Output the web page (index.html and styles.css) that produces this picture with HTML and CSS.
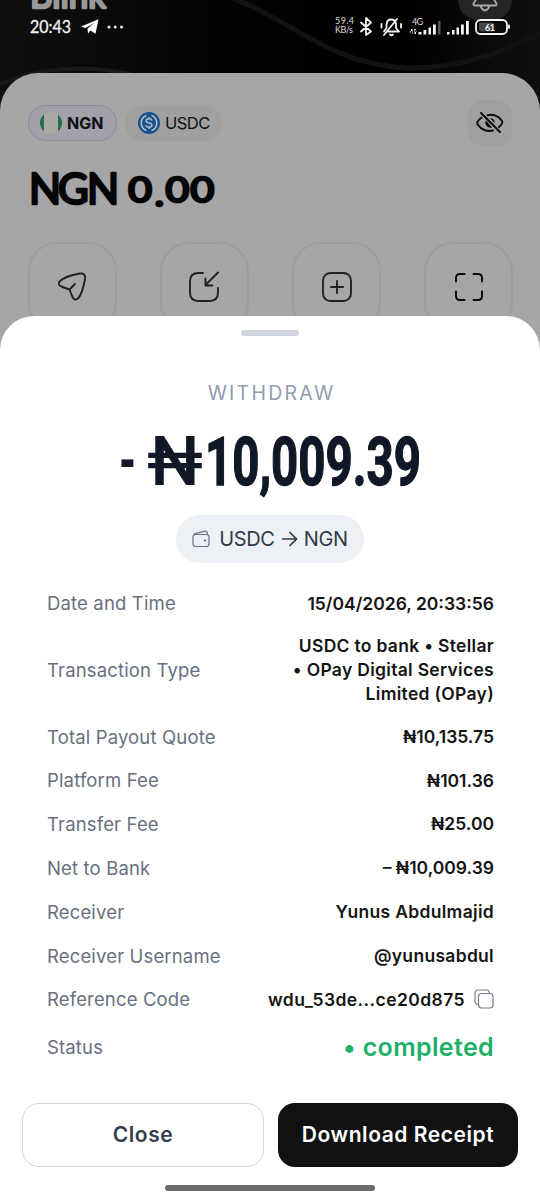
FILE: index.html
```
<!DOCTYPE html>
<html lang="en">
<head>
<meta charset="utf-8">
<meta name="viewport" content="width=device-width, initial-scale=1">
<title>Withdraw receipt</title>
<link rel="stylesheet" href="styles.css">
</head>
<body>
<div class="screen">
  <header class="top">
    <svg class="backdrop" width="540" height="130" viewBox="0 0 540 130" aria-hidden="true">
      <defs><linearGradient id="edge" x1="0" y1="0" x2="1" y2="0"><stop offset="0" stop-color="#101010"/><stop offset=".4" stop-color="#030303"/><stop offset=".75" stop-color="#000"/><stop offset="1" stop-color="#101010"/></linearGradient></defs>
      <rect width="540" height="130" fill="url(#edge)"/>
      <path d="M190-12C280 0 310 62 405 68C470 69 510 48 560 24" fill="none" stroke="#121212" stroke-width="5"/>
      <path d="M0 84Q60 60 130 74" fill="none" stroke="#1a1a1a" stroke-width="4"/>
    </svg>
    <svg class="brand" width="100" height="14" viewBox="0 0 100 14"><text class="hand" x="0" y="8" textLength="76" lengthAdjust="spacingAndGlyphs">Blink</text></svg>
    <div class="bell"><svg width="54" height="24" viewBox="0 0 54 24" fill="none" stroke="#aaa" stroke-width="1.800" stroke-linecap="round" stroke-linejoin="round"><path d="M19-6V-2L15.500 3.500Q15 5.500 17 5.500H37Q39 5.500 38.500 3.500L35-2V-6M22.500 6Q27 15 31.500 6"/></svg></div>
    <div class="status-bar">
      <div class="status-left">
        <svg class="time" width="44" height="22" viewBox="0 0 44 22"><text class="clock" x="0" y="16.500" textLength="41" lengthAdjust="spacingAndGlyphs">20:43</text></svg>
        <svg width="18" height="16" viewBox="0 0 18 16" fill="#fff"><path d="M0 7.500L17.500.2 14.500 14.700 9.500 11.500 7 14.500 6.500 9.500 13 4 4.500 9z"/></svg>
        <svg width="18" height="6" viewBox="0 0 18 6" fill="#eee"><circle cx="3" cy="3" r="1.500"/><circle cx="9.200" cy="3" r="1.500"/><circle cx="15.500" cy="3" r="1.500"/></svg>
      </div>
      <svg class="status-right" width="180" height="24" viewBox="330 14 180 24">
        <g class="tiny"><text x="335" y="23.500" textLength="19">59.4</text><text x="335" y="32.500" textLength="18">KB/s</text><text x="412" y="24.500" textLength="11">4G</text></g>
        <g fill="none" stroke="#f4f4f4" stroke-width="1.800" stroke-linecap="round" stroke-linejoin="round">
          <path d="M361 22.500L371 31.500 366 35V18L371 22.500 361 31.500"/>
          <path d="M384 31.500L386.500 28V24.500Q387 19.500 391 19.500T396 23.500V28L399 31.500H388M384 35L397 19M390 34.500Q391.500 36 393 34.500M381.500 24V27.500M401 24V27.500"/>
          <rect x="476" y="20" width="31" height="14" rx="4.500"/><path d="M509 25.500V28"/>
        </g>
        <rect x="479" y="22.500" width="15" height="9" rx="2" fill="#444"/>
        <text class="battery" x="485" y="30.500" textLength="10">61</text>
        <g fill="#f4f4f4"><path d="M411 29h1.500v5H411zM414.500 29h1.500v5h-1.500zM409.500 31.500l2.500 3V31zM417 31.500l-3-3V32zM418.500 32h3v2.500h-3zM423.500 30h2.800v4.500h-2.800zM428.500 27.500h2.500v7h-2.500zM433 24.500h2.800v10H433zM447 32h2.500v2.500H447zM452 30h2.500v4.500H452zM456.500 27.500h2.500v7h-2.500zM461 24.500h2.800v10H461zM466 21h2.800v13.500H466z"/><path d="M438 21h2.500v13.500H438z" fill="#555"/></g>
      </svg>
    </div>
  </header>

  <main class="wallet">
    <div class="wallet-top">
      <div class="tabs">
        <div class="tab selected"><svg width="22" height="22" viewBox="0 0 22 22"><defs><clipPath id="flag"><circle cx="11" cy="11" r="11"/></clipPath></defs><g clip-path="url(#flag)"><path fill="#a9aaa6" d="M0 0h22v22H0z"/><path fill="#236f42" d="M0 0h4v22H0zM18 0h4v22h-4z"/></g></svg><span class="t-ngn">NGN</span></div>
        <div class="tab"><svg width="22" height="22" viewBox="0 0 22 22" fill="none" stroke="#b5bdc8"><circle cx="11" cy="11" r="11" fill="#1b518b" stroke="none"/><path stroke-width="1.600" d="M8.500 3.500A8 8 0 0 0 8.500 18.500M13.500 3.500A8 8 0 0 1 13.500 18.500"/><path stroke-width="1.500" d="M14 8.500Q13.500 6.800 11 6.800C7.500 6.800 7.300 10 10 10.700L12 11.200C15 12 14.300 15.200 11 15.200Q8.200 15.200 8 13.200M11 5v2M11 15v2"/></svg><span class="t-usdc">USDC</span></div>
      </div>
      <div class="eye"><svg width="28" height="24" viewBox="0 0 28 24" fill="none" stroke="#090909" stroke-width="1.900" stroke-linecap="round"><path d="M5 2L24 21M11.500 4.300C17 2.800 23 5 26 10Q27.500 12 23 16M17 19.500C11 21 5 18.500 2 14Q.5 12 2 10Q3 8.500 5.500 6.800"/><path d="M10 9.500A5 5 0 0 0 16 16.500zM14 7.200A5 5 0 0 1 18.800 12z" fill="#090909" stroke="none"/></svg></div>
    </div>
    <svg class="balance" width="200" height="54" viewBox="0 0 200 54"><text x="1 30 59" y="37">NGN</text><text class="zeros" transform="scale(1.2 1)" x="83.500 105.500 114.500 135.500" y="35" dy="0 4 -4 0">0.00</text></svg>
    <div class="actions">
      <div class="action"><svg width="32" height="32" viewBox="0 0 32 32"><path d="M3.500 10.500Q9 5 24 2.500Q30 2 29 8Q26.500 22 22.500 27Q19 30.500 16.500 26L13.500 18.500 6.500 16Q1 14 3.500 10.500M13.500 18.500L19 13"/></svg></div>
      <div class="action"><svg width="32" height="32" viewBox="0 0 32 32"><path d="M15 2H10.500Q2 2 2 10.500V21.500Q2 30 10.500 30H21.500Q30 30 30 21.500V17M30 1.500L17.500 14M17.500 7.500V14.500H24.500"/></svg></div>
      <div class="action"><svg width="32" height="32" viewBox="0 0 32 32"><rect x="2" y="2" width="28" height="28" rx="7.500"/><path d="M16 10V22M10 16H22"/></svg></div>
      <div class="action dark"><svg width="32" height="32" viewBox="0 0 32 32"><path d="M3 10.500V7Q3 3 7 3H11.500M20.500 3H25Q29 3 29 7V10.500M29 20.500V25Q29 29 25 29H20.500M11.500 29H7Q3 29 3 25V20.500"/></svg></div>
    </div>
  </main>

  <section class="sheet">
    <div class="handle"></div>
    <h1 class="title">WITHDRAW</h1>
    <svg class="amount" width="304" height="64" viewBox="0 0 304 64"><text x="1" y="52" textLength="17" lengthAdjust="spacingAndGlyphs">-</text><text class="naira" x="29" y="53" textLength="56" lengthAdjust="spacingAndGlyphs">₦</text><text class="digits" x="87" y="52.500" textLength="216" lengthAdjust="spacingAndGlyphs">10,009.39</text></svg>
    <div class="pair"><svg class="purse" width="18" height="18" viewBox="0 0 18 18" fill="none" stroke="#6c7586" stroke-width="1.200" stroke-linejoin="round"><rect x="1" y="4.500" width="16" height="12" rx="2.500"/><path d="M1.500 5.500Q1.500 4 4 3.300L13 1.200Q15.500 1 15.500 4.500"/><circle cx="13" cy="10.500" r="1" fill="#4a5568" stroke="none"/></svg><span>USDC</span><svg width="17" height="18" viewBox="0 0 17 18" fill="none" stroke="#303b4b" stroke-width="1.700"><path d="M1 9H15.500M8.500 2L15.500 9 8.500 16"/></svg><span>NGN</span></div>

    <dl class="details">
      <div class="row"><dt>Date and Time</dt><dd>15/04/2026, 20:33:56</dd></div>
      <div class="row tall"><dt>Transaction Type</dt><dd class="words">USDC to bank • Stellar<br>• OPay Digital Services<br>Limited (OPay)</dd></div>
      <div class="row"><dt>Total Payout Quote</dt><dd>₦10,135.75</dd></div>
      <div class="row"><dt>Platform Fee</dt><dd>₦101.36</dd></div>
      <div class="row"><dt>Transfer Fee</dt><dd>₦25.00</dd></div>
      <div class="row"><dt>Net to Bank</dt><dd>– ₦10,009.39</dd></div>
      <div class="row"><dt>Receiver</dt><dd class="words">Yunus Abdulmajid</dd></div>
      <div class="row"><dt>Receiver Username</dt><dd class="words">@yunusabdul</dd></div>
      <div class="row"><dt>Reference Code</dt><dd class="words reference">wdu_53de...ce20d875<svg width="20" height="20" viewBox="0 0 20 20" fill="none" stroke="#747b8b" stroke-width="1.200"><rect x="4.500" y="4.500" width="14.500" height="14.500" rx="3"/><path d="M4.500 15.500Q1 15.500 1 12V4.500Q1 1 4.500 1H12Q15.500 1 15.500 4.500"/></svg></dd></div>
      <div class="row last"><dt>Status</dt><dd class="complete">• completed</dd></div>
    </dl>

    <footer class="buttons">
      <button class="close">Close</button>
      <button class="download">Download Receipt</button>
    </footer>
    <div class="home"></div>
  </section>
</div>
</body>
</html>
```
FILE: styles.css
```
* { box-sizing: border-box; }
body { margin: 0; font-family: Inter, sans-serif; }
svg { display: block; flex: none; }
.screen { width: 540px; height: 1200px; overflow: hidden; background: #fff; }
.top { height: 73px; position: relative; }
.backdrop { position: absolute; left: 0; top: 0; }
.brand { position: absolute; left: 30px; top: 0; }
.hand { font: 400 36px Lato, sans-serif; fill: #999; stroke: #999; stroke-width: 2.600px; stroke-linejoin: round; }
.bell { position: absolute; left: 458px; top: 0; width: 54px; height: 20px; border-radius: 0 0 27px 27px; background: #252525; }
.status-bar { position: relative; display: flex; justify-content: space-between; padding: 14px 30px 0; }
.status-left { display: flex; align-items: center; gap: 7px; height: 26px; }
.time { overflow: visible; }
.clock { font: 400 17px Lato, sans-serif; fill: #f4f4f4; stroke: #f4f4f4; stroke-width: .3px; }
.tiny { font: 400 9px Lato, sans-serif; fill: #ddd; }
.battery { font: 700 9px Lato, sans-serif; fill: #eee; }
.wallet { position: relative; height: 280px; padding: 27px 28px 0; background: #a6a6a6; border-radius: 38px 38px 0 0; }
.wallet-top { display: flex; justify-content: space-between; align-items: center; height: 46px; }
.tabs { display: flex; gap: 8px; }
.tab { display: flex; align-items: center; gap: 5px; width: 97px; height: 36px; padding-left: 13px; border-radius: 18px; background: #a0a0a0; font-size: 16.500px; color: #111; }
.selected { width: 89px; padding-left: 11px; border: 1px solid #8d8c98; background: #a1a0ab; font-weight: 700; font-size: 16px; }
.t-usdc { letter-spacing: -.5px; }
.eye { display: flex; align-items: center; justify-content: center; width: 44px; height: 46px; border-radius: 15px; background: #a0a0a0; }
.balance { margin-top: 21px; overflow: visible; font: 400 42px Lato, sans-serif; fill: #050505; stroke: #050505; stroke-width: 2.600px; stroke-linejoin: round; }
.zeros { font-size: 34px; }
.actions { display: flex; justify-content: space-between; margin: 21px -1.500px 0 -.5px; }
.action { display: flex; justify-content: center; align-items: center; width: 89px; height: 90px; border: 2px solid #9d9d9d; border-radius: 29px; }
.action svg { fill: none; stroke: #202020; stroke-width: 1.900; stroke-linecap: round; stroke-linejoin: round; }
.action.dark svg { stroke: #080808; }
.sheet { position: relative; display: flex; flex-direction: column; align-items: center; height: 884px; margin-top: -37px; padding-top: 14px; background: #fff; border-radius: 34px 34px 0 0; }
.handle { flex: none; width: 58px; height: 6px; border-radius: 3px; background: #ced5dc; }
.title { margin: 44px 0 0; padding-left: 3px; font-size: 19.500px; font-weight: 400; line-height: 26px; letter-spacing: 2.250px; color: #929cae; }
.amount { margin-top: 26px; overflow: visible; font: 700 68px Roboto, sans-serif; fill: #101827; }
.naira { font-weight: 500; }
.digits { font-size: 67px; stroke: #101827; stroke-width: 1.400px; }
.pair { display: flex; align-items: center; gap: 6px; height: 48px; margin-top: 19px; padding: 0 16.500px; background: #edf1f6; border-radius: 24px; color: #303b4b; font-size: 20px; letter-spacing: -.3px; }
.purse { margin-right: 3px; }
.details { width: 446px; margin: 18.500px 0 0; }
.row { display: flex; align-items: center; justify-content: space-between; height: 43.800px; }
.row.tall { height: 89.500px; }
dt { font-size: 18.500px; letter-spacing: .15px; color: #687080; }
dd { margin: 0 -1px 0 0; text-align: right; font-size: 17.500px; line-height: 23.700px; font-weight: 600; color: #151515; }
.words { letter-spacing: .3px; }
.reference { display: flex; align-items: center; gap: 9px; letter-spacing: .42px; }
.row.last { height: 52px; }
.complete { font-size: 25px; line-height: 30px; letter-spacing: .35px; color: #1cb068; }
.buttons { display: grid; grid-template-columns: 242px 240px; gap: 14px; margin-top: 29.500px; }
.buttons button { height: 64px; border-radius: 17px; font: 600 21px Inter, sans-serif; letter-spacing: .55px; }
.buttons .close { border: 1px solid #d0d6dc; background: #fff; color: #343e4e; }
.buttons .download { border: 0; background: #111; color: #fff; }
.home { width: 210px; height: 6px; margin-top: 18px; border-radius: 3px; background: #6b6b6b; }
```
